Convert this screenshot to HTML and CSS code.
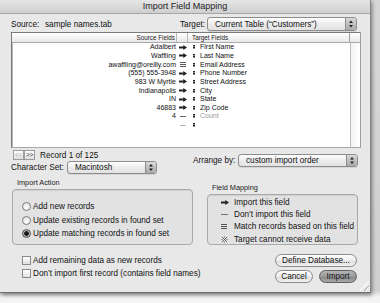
FILE: index.html
```html
<!DOCTYPE html>
<html>
<head>
<meta charset="utf-8">
<link rel="stylesheet" href="styles.css">
</head>
<body>
<div class="window">
  <div class="titlebar">Import Field Mapping</div>
  <div class="content">
    <div class="toprow">
      <span class="lbl">Source:</span>
      <span class="lbl">sample names.tab</span>
      <span class="lbl">Target:</span>
      <div class="popup">
        <span class="popup-text">Current Table (“Customers”)</span>
        <span class="stepper"><svg width="10" height="12" viewBox="0 0 10 12"><path d="M5 2.5 7 5H3z M5 9.5 7 7H3z" fill="#222"/></svg></span>
      </div>
    </div>

    <div class="table">
      <div class="thead">
        <div class="th th-src">Source Fields</div>
        <div class="th th-mid"></div>
        <div class="th th-tgt">Target Fields</div>
        <div class="th th-corner"></div>
      </div>
      <div class="tbody">
        <div class="rows">
          <div class="tr"><span class="s">Adalbert</span><span class="m"><svg class="arrow" width="8" height="5" viewBox="0 0 8 5"><path d="M0 1.6h4.3V0L8 2.5 4.3 5V3.4H0z" fill="#222"/></svg></span><span class="t"><i class="dots"></i>First Name</span></div>
          <div class="tr"><span class="s">Waffling</span><span class="m"><svg class="arrow" width="8" height="5" viewBox="0 0 8 5"><path d="M0 1.6h4.3V0L8 2.5 4.3 5V3.4H0z" fill="#222"/></svg></span><span class="t"><i class="dots"></i>Last Name</span></div>
          <div class="tr"><span class="s">awaffling@oreilly.com</span><span class="m"><svg width="6" height="5" viewBox="0 0 6 5"><path d="M0 0.5h6M0 2.5h6M0 4.5h6" stroke="#444" stroke-width="0.9"/></svg></span><span class="t"><i class="dots"></i>Email Address</span></div>
          <div class="tr"><span class="s">(555) 555-3948</span><span class="m"><svg class="arrow" width="8" height="5" viewBox="0 0 8 5"><path d="M0 1.6h4.3V0L8 2.5 4.3 5V3.4H0z" fill="#222"/></svg></span><span class="t"><i class="dots"></i>Phone Number</span></div>
          <div class="tr"><span class="s">983 W Myrtle</span><span class="m"><svg class="arrow" width="8" height="5" viewBox="0 0 8 5"><path d="M0 1.6h4.3V0L8 2.5 4.3 5V3.4H0z" fill="#222"/></svg></span><span class="t"><i class="dots"></i>Street Address</span></div>
          <div class="tr"><span class="s">Indianapolis</span><span class="m"><svg class="arrow" width="8" height="5" viewBox="0 0 8 5"><path d="M0 1.6h4.3V0L8 2.5 4.3 5V3.4H0z" fill="#222"/></svg></span><span class="t"><i class="dots"></i>City</span></div>
          <div class="tr"><span class="s">IN</span><span class="m"><svg class="arrow" width="8" height="5" viewBox="0 0 8 5"><path d="M0 1.6h4.3V0L8 2.5 4.3 5V3.4H0z" fill="#222"/></svg></span><span class="t"><i class="dots"></i>State</span></div>
          <div class="tr"><span class="s">46883</span><span class="m"><svg class="arrow" width="8" height="5" viewBox="0 0 8 5"><path d="M0 1.6h4.3V0L8 2.5 4.3 5V3.4H0z" fill="#222"/></svg></span><span class="t"><i class="dots"></i>Zip Code</span></div>
          <div class="tr"><span class="s">4</span><span class="m"><svg width="6" height="5" viewBox="0 0 6 5"><path d="M0 2.5h6" stroke="#555" stroke-width="0.9"/></svg></span><span class="t dim"><i class="dots"></i>Count</span></div>
          <div class="tr"><span class="s"></span><span class="m"><svg width="6" height="5" viewBox="0 0 6 5"><path d="M0 2.5h6" stroke="#aaa" stroke-width="0.9"/></svg></span><span class="t"><i class="dots"></i></span></div>
        </div>
        <div class="scroll"></div>
      </div>
    </div>

    <div class="lower">
      <div class="col-left">
        <div class="nav">
          <span class="navbtn disabled">&lt;&lt;</span><span class="navbtn">&gt;&gt;</span>
          <span class="navtext">Record 1 of 125</span>
        </div>
        <div class="charset">
          <span class="charset-lbl">Character Set:</span>
          <div class="popup popup-cs">
            <span class="popup-text">Macintosh</span>
            <span class="stepper"><svg width="10" height="11" viewBox="0 0 10 11"><path d="M5 2 7 4.5H3z M5 9 7 6.5H3z" fill="#222"/></svg></span>
          </div>
        </div>
        <div class="grp-label grp-label-ia">Import Action</div>
        <div class="group group-ia">
          <div class="opt"><span class="radio"></span>Add new records</div>
          <div class="opt"><span class="radio"></span>Update existing records in found set</div>
          <div class="opt"><span class="radio on"></span>Update matching records in found set</div>
        </div>
      </div>
      <div class="col-right">
        <div class="arrange">
          <span class="arrange-lbl">Arrange by:</span>
          <div class="popup popup-ar">
            <span class="popup-text">custom import order</span>
            <span class="stepper"><svg width="10" height="11" viewBox="0 0 10 11"><path d="M5 2 7 4.5H3z M5 9 7 6.5H3z" fill="#222"/></svg></span>
          </div>
        </div>
        <div class="grp-label grp-label-fm">Field Mapping</div>
        <div class="group group-fm">
          <div class="leg"><span class="ico"><svg width="8" height="5" viewBox="0 0 8 5"><path d="M0 1.6h4.3V0L8 2.5 4.3 5V3.4H0z" fill="#222"/></svg></span>Import this field</div>
          <div class="leg"><span class="ico"><svg width="7" height="5" viewBox="0 0 7 5"><path d="M0 2.5h7" stroke="#666" stroke-width="0.9"/></svg></span>Don’t import this field</div>
          <div class="leg"><span class="ico"><svg width="6" height="5" viewBox="0 0 6 5"><path d="M0 0.5h6M0 2.5h6M0 4.5h6" stroke="#444" stroke-width="0.9"/></svg></span>Match records based on this field</div>
          <div class="leg"><span class="ico"><svg width="7" height="7" viewBox="0 0 7 7"><path d="M1 1 6 6M6 1 1 6" stroke="#555" stroke-width="0.9"/><circle cx="3.5" cy="1" r="0.6" fill="#555"/><circle cx="3.5" cy="6" r="0.6" fill="#555"/><circle cx="1" cy="3.5" r="0.6" fill="#555"/><circle cx="6" cy="3.5" r="0.6" fill="#555"/></svg></span>Target cannot receive data</div>
        </div>
      </div>
    </div>

    <div class="bottom">
      <div class="checks">
        <div class="chk"><span class="box"></span>Add remaining data as new records</div>
        <div class="chk"><span class="box"></span>Don’t import first record (contains field names)</div>
      </div>
      <div class="buttons">
        <div class="btn btn-define">Define Database...</div>
        <div class="btnrow">
          <div class="btn btn-cancel">Cancel</div>
          <div class="btn btn-import">Import</div>
        </div>
      </div>
    </div>
  </div>
  <div class="resize"></div>
</div>
</body>
</html>
```

FILE: styles.css
```css
* { box-sizing: border-box; }
html, body { margin: 0; padding: 0; }
body {
  width: 380px;
  height: 303px;
  background: linear-gradient(#d6d6d6, #d0d0d0 290px, #f4f4f4 297px);
  font-family: "Liberation Sans", Arial, sans-serif;
  font-size: 8.2px;
  color: #111;
  overflow: hidden;
}
.window {
  position: relative;
  width: 371px;
  height: 293px;
  background: #e8e8e8;
  border-right: 1px solid #858585;
  border-bottom: 1px solid #6f6f6f;
  box-shadow: 1px 2px 4px rgba(0,0,0,0.45);
}
.titlebar {
  height: 14px;
  background: linear-gradient(#e6e6e6, #cfcfcf);
  border-bottom: 1px solid #a6a6a6;
  text-align: center;
  font-size: 9px;
  line-height: 13px;
  color: #222;
}
.content {
  padding: 3px 9px 0 11px;
}
.toprow {
  display: grid;
  grid-template-columns: 34px 135px 27px 150px;
  align-items: center;
  height: 14px;
}
.lbl { white-space: nowrap; }

.popup {
  position: relative;
  display: flex;
  align-items: center;
  height: 14px;
  border: 1px solid #8c8c8c;
  border-radius: 3px;
  background: linear-gradient(#ffffff, #ececec 50%, #e2e2e2);
  box-shadow: 0 1px 0 rgba(0,0,0,0.08);
  overflow: hidden;
}
.popup-text { flex: 1; padding-left: 7px; white-space: nowrap; }
.stepper {
  display: flex;
  align-items: center;
  justify-content: center;
  width: 11px;
  height: 100%;
  background: linear-gradient(#d8d8d8, #a9a9a9);
  border-left: 1px solid #8c8c8c;
}

.table {
  margin-top: 1px;
  width: 350px;
  height: 116px;
  display: flex;
  flex-direction: column;
  background: #fff;
  border: 1px solid #7a7a7a;
  border-right-color: #a0a0a0;
  border-bottom-color: #a8a8a8;
  box-shadow: inset 1px 1px 0 #b8b8b8;
}
.thead {
  display: grid;
  grid-template-columns: 165px 11px 162px 10px;
  height: 10px;
  background: linear-gradient(#ffffff, #e9e9e9);
  border-bottom: 1px solid #a9a9a9;
  font-size: 6.3px;
  line-height: 9px;
  color: #222;
}
.th { border-right: 1px solid #b9b9b9; white-space: nowrap; }
.th-src { text-align: right; padding-right: 1px; }
.th-tgt { padding-left: 4px; }
.th-corner { border-right: none; border-left: 1px solid #9e9e9e; margin-left: -1px; }
.tbody {
  flex: 1;
  display: grid;
  grid-template-columns: 1fr 10px;
}
.rows { padding-top: 0; }
.scroll {
  background: linear-gradient(90deg, #f2f2f2, #ffffff);
  border-left: 1px solid #bdbdbd;
}
.tr {
  display: grid;
  grid-template-columns: 165px 11px 1fr;
  height: 8.65px;
  align-items: center;
  font-size: 7px;
  line-height: 8px;
  white-space: nowrap;
}
.s { text-align: right; padding-right: 1px; }
.m { display: flex; align-items: center; justify-content: center; }
.t { display: flex; align-items: center; padding-left: 5px; }
.t.dim { color: #9a9a9a; }
.dots {
  display: inline-block;
  width: 2px;
  height: 4px;
  margin-right: 5px;
  background: repeating-linear-gradient(#222 0 1px, #888 1px 2px);
}

.lower {
  display: grid;
  grid-template-columns: 182px 1fr;
}
.nav {
  display: flex;
  align-items: center;
  margin-top: 2px;
  height: 10px;
  padding-left: 2px;
}
.navbtn {
  display: inline-block;
  width: 11px;
  height: 10px;
  border: 1px solid #9c9c9c;
  background: linear-gradient(#ffffff, #dedede);
  font-size: 6.5px;
  line-height: 8px;
  text-align: center;
  color: #333;
  letter-spacing: -0.3px;
}
.navbtn.disabled { color: #b0b0b0; }
.navtext { margin-left: 5px; }
.charset {
  display: flex;
  align-items: center;
  margin-top: 1px;
  height: 13px;
}
.charset-lbl { width: 56px; white-space: nowrap; }
.popup-cs { width: 90px; height: 13px; }
.grp-label {
  font-size: 7.3px;
  height: 10px;
  line-height: 10px;
  color: #222;
}
.grp-label-ia { margin-top: 4px; padding-left: 6px; }
.group {
  border: 1px solid #a9a9a9;
  border-radius: 4px;
  background: rgba(0,0,0,0.025);
  box-shadow: inset 0 1px 1px rgba(0,0,0,0.08);
}
.group-ia {
  margin-top: 1px;
  margin-left: 1px;
  height: 56px;
  padding: 10px 0 0 9px;
}
.opt {
  display: flex;
  align-items: center;
  height: 13.5px;
  white-space: nowrap;
}
.radio {
  width: 9px;
  height: 9px;
  border-radius: 50%;
  border: 1px solid #7c7c7c;
  background: radial-gradient(circle at 50% 70%, #ffffff, #dcdcdc);
  margin-right: 2px;
}
.radio.on {
  background: radial-gradient(circle, #1a1a1a 0 2px, #bdbdbd 2.6px, #8e8e8e);
  border-color: #555;
}
.arrange {
  display: flex;
  align-items: center;
  margin-top: 6px;
  height: 13px;
}
.arrange-lbl { width: 45px; white-space: nowrap; }
.popup-ar { width: 120px; height: 13px; }
.grp-label-fm { margin-top: 16px; padding-left: 19px; }
.group-fm {
  margin-top: 1px;
  margin-left: 14px;
  width: 151px;
  height: 51px;
  padding: 1px 0 0 13px;
}
.leg {
  display: flex;
  align-items: center;
  height: 12.3px;
  white-space: nowrap;
}
.ico {
  width: 13px;
  display: flex;
  align-items: center;
}

.bottom {
  display: flex;
  justify-content: space-between;
  margin-top: 9px;
}
.checks { padding-left: 11px; }
.chk {
  display: flex;
  align-items: center;
  height: 13px;
  white-space: nowrap;
}
.box {
  width: 9px;
  height: 9px;
  border: 1px solid #8a8a8a;
  background: linear-gradient(#ffffff, #e0e0e0);
  margin-right: 2px;
}
.buttons {
  width: 82px;
  margin-right: 4px;
  margin-top: 0;
}
.btn {
  height: 13px;
  border: 1px solid #8a8a8a;
  border-radius: 7px;
  background: linear-gradient(#ffffff, #ececec 50%, #dcdcdc 51%, #f2f2f2);
  text-align: center;
  line-height: 11px;
  white-space: nowrap;
}
.btnrow {
  display: flex;
  justify-content: space-between;
  margin-top: 3px;
}
.btn-cancel { width: 38px; }
.btn-import {
  width: 38px;
  background: linear-gradient(#b4b4b4, #9a9a9a 50%, #858585 51%, #a8a8a8);
  border-color: #5f5f5f;
  color: #1a1a1a;
}
.resize {
  position: absolute;
  right: 1px;
  bottom: 1px;
  width: 10px;
  height: 10px;
  background: repeating-linear-gradient(135deg, transparent 0 2px, #a0a0a0 2px 3px, #fafafa 3px 4px);
  clip-path: polygon(100% 0, 100% 100%, 0 100%);
}
```
